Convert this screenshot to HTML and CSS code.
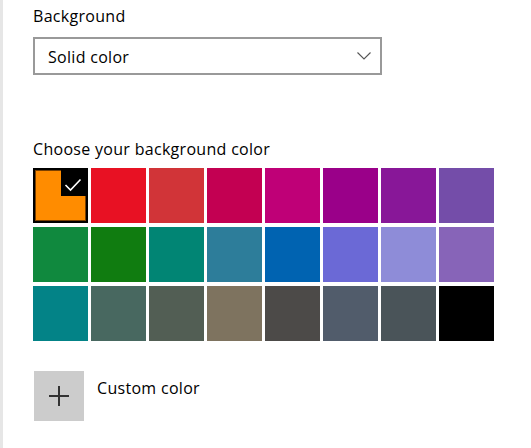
FILE: index.html
```html
<!DOCTYPE html>
<html>
<head>
<meta charset="utf-8">
<link rel="stylesheet" href="styles.css">
</head>
<body>
<div class="page">
  <div class="label">Background</div>
  <div class="select">
    <span class="select-text">Solid color</span>
    <svg class="chevron" width="14" height="8" viewBox="0 0 14 8"><path d="M0.5 0.5 L7 7 L13.5 0.5" fill="none" stroke="#555" stroke-width="1.1"/></svg>
  </div>
  <div class="label choose">Choose your background color</div>
  <div class="grid">
    <div class="swatch selected" style="background:#FF8C00">
      <span class="check"><svg width="27" height="28" viewBox="0 0 27 28"><path d="M4.5 17 L9.5 22 L19.5 11.5" fill="none" stroke="#fff" stroke-width="1.6"/></svg></span>
    </div>
    <div class="swatch" style="background:#E81123"></div>
    <div class="swatch" style="background:#D13438"></div>
    <div class="swatch" style="background:#C30052"></div>
    <div class="swatch" style="background:#BF0077"></div>
    <div class="swatch" style="background:#9A0089"></div>
    <div class="swatch" style="background:#881798"></div>
    <div class="swatch" style="background:#744DA9"></div>
    <div class="swatch" style="background:#10893E"></div>
    <div class="swatch" style="background:#107C10"></div>
    <div class="swatch" style="background:#018574"></div>
    <div class="swatch" style="background:#2D7D9A"></div>
    <div class="swatch" style="background:#0063B1"></div>
    <div class="swatch" style="background:#6B69D6"></div>
    <div class="swatch" style="background:#8E8CD8"></div>
    <div class="swatch" style="background:#8764B8"></div>
    <div class="swatch" style="background:#038387"></div>
    <div class="swatch" style="background:#486860"></div>
    <div class="swatch" style="background:#525E54"></div>
    <div class="swatch" style="background:#7E735F"></div>
    <div class="swatch" style="background:#4C4A48"></div>
    <div class="swatch" style="background:#515C6B"></div>
    <div class="swatch" style="background:#4A5459"></div>
    <div class="swatch" style="background:#000000"></div>
  </div>
  <div class="custom">
    <div class="plus-btn">
      <svg width="20" height="20" viewBox="0 0 20 20"><path d="M10 0 V20 M0 10 H20" stroke="#333" stroke-width="2"/></svg>
    </div>
    <div class="custom-text">Custom color</div>
  </div>
</div>
</body>
</html>
```
FILE: styles.css
```css
html, body {
  margin: 0;
  padding: 0;
  background: #fff;
}
body {
  font-family: "Open Sans", "Noto Sans", sans-serif;
  color: #000;
  width: 531px;
  height: 448px;
  overflow: hidden;
}
.page {
  border-left: 3px solid #e6e6e6;
  padding-left: 30px;
  height: 448px;
  box-sizing: border-box;
  padding-top: 6px;
}
.label {
  font-size: 16px;
  letter-spacing: 0.3px;
  line-height: 20px;
  height: 20px;
}
.select {
  margin-top: 11px;
  width: 349px;
  height: 38px;
  box-sizing: border-box;
  border: 2px solid #999;
  display: flex;
  align-items: center;
  justify-content: space-between;
  padding: 0 9px 0 13px;
}
.select-text {
  font-size: 16px;
  letter-spacing: 0.3px;
  line-height: 20px;
  margin-top: 1px;
}
.chevron {
  display: block;
}
.choose {
  margin-top: 64px;
}
.grid {
  margin-top: 9px;
  display: grid;
  grid-template-columns: repeat(8, 55px);
  grid-auto-rows: 55px;
  column-gap: 3px;
  row-gap: 4px;
}
.swatch {
  position: relative;
}
.swatch.selected {
  border: 2px solid #000;
  box-shadow: inset 0 0 0 1px #7a4000;
}
.check {
  position: absolute;
  top: -2px;
  right: -2px;
  width: 27px;
  height: 28px;
  background: #000;
}
.check svg {
  display: block;
}
.custom {
  margin-top: 30px;
  display: flex;
  align-items: flex-start;
}
.plus-btn {
  margin-left: 1px;
  width: 50px;
  height: 50px;
  background: #ccc;
  display: flex;
  align-items: center;
  justify-content: center;
}
.plus-btn svg {
  display: block;
}
.custom-text {
  margin-left: 13px;
  font-size: 16px;
  letter-spacing: 0.3px;
  line-height: 20px;
  margin-top: 7px;
}
```
